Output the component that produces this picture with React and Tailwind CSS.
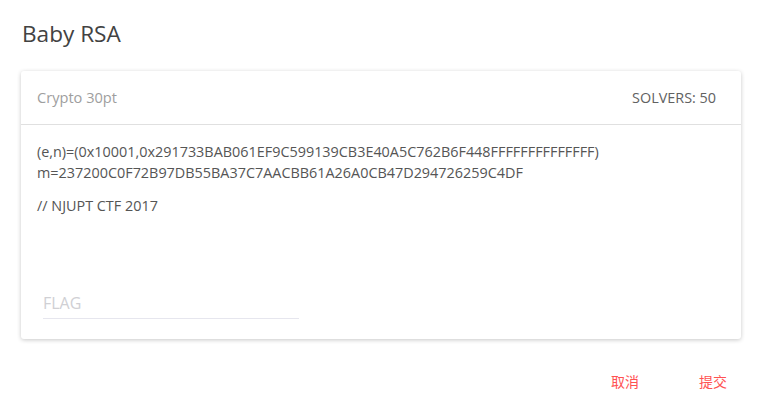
export default function App() {
  return (
    <div
      className="w-[762px] h-[408px] bg-white relative overflow-hidden"
      style={{ fontFamily: '"Open Sans", "Noto Sans CJK SC", sans-serif' }}
    >
      <div className="pl-[22px] pt-[19px] h-[71px]">
        <h1 className="text-[22.6px] leading-[30px] text-[#424242]">Baby RSA</h1>
      </div>
      <div className="mx-[21px] w-[720px] bg-white rounded-[3px] shadow-[0_1px_4px_rgba(0,0,0,0.22)]">
        <div className="h-[54px] flex items-center justify-between pl-[16px] pr-[25px] border-b border-[#e0e0e0]">
          <span className="text-[14.6px] text-[#9e9e9e]">Crypto 30pt</span>
          <span className="text-[14.4px] text-[#616161]">SOLVERS: 50</span>
        </div>
        <div className="pl-[16px] pr-[16px] pt-[16px] text-[14.4px] text-[#555] leading-[21px]">
          <p>(e,n)=(0x10001,0x291733BAB061EF9C599139CB3E40A5C762B6F448FFFFFFFFFFFFFF)</p>
          <p>m=237200C0F72B97DB55BA37C7AACBB61A26A0CB47D294726259C4DF</p>
          <p className="mt-[12px]">// NJUPT CTF 2017</p>
        </div>
        <div className="pl-[22px] pt-[75px] pb-[20px]">
          <div className="w-[256px] border-b border-[#e6e6ee] pb-[3px]">
            <span className="text-[16px] text-[#d0d0d4]">FLAG</span>
          </div>
        </div>
      </div>
      <div className="flex justify-end pr-[35px] pt-[32px] gap-[60px]">
        <span className="text-[14px] text-[#ff5252]">取消</span>
        <span className="text-[14px] text-[#ff5252]">提交</span>
      </div>
    </div>
  );
}
